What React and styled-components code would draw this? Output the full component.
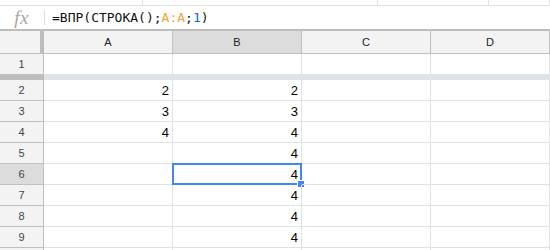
import React from 'react';
import styled, { createGlobalStyle } from 'styled-components';

const COLUMNS = ['A', 'B', 'C', 'D'];
const ROWS = [
  { n: 2, a: '2', b: '2' },
  { n: 3, a: '3', b: '3' },
  { n: 4, a: '4', b: '4' },
  { n: 5, a: '', b: '4' },
  { n: 6, a: '', b: '4', active: true },
  { n: 7, a: '', b: '4' },
  { n: 8, a: '', b: '4' },
  { n: 9, a: '', b: '4' },
  { n: 10, a: '', b: '', hidden: true },
];

const GlobalStyle = createGlobalStyle`
  html, body {
    margin: 0;
    padding: 0;
    background: #fff;
    overflow: hidden;
  }
  body {
    font-family: "Liberation Sans", Arial, sans-serif;
  }
`;

const App = () => (
  <>
    <GlobalStyle />
    <Sheet>
      <TopStrip>
        <StripPart w={143} />
        <StripPart w={235} />
        <StripPart w={111} />
        <StripPart />
      </TopStrip>
      <FormulaBar>
        <FxBox>fx</FxBox>
        <FormulaText>
          =ВПР(СТРОКА();<RangeRef>A:A</RangeRef>;<NumRef>1</NumRef>)
        </FormulaText>
      </FormulaBar>
      <Grid>
        <Corner />
        {COLUMNS.map((c) => (
          <ColHeader key={c} selected={c === 'B'}>
            {c}
          </ColHeader>
        ))}

        <RowHeader>1</RowHeader>
        {COLUMNS.map((c) => (
          <Cell key={`1${c}`} />
        ))}

        <FrozenHead />
        <FrozenBar />

        {ROWS.map((row) => (
          <React.Fragment key={row.n}>
            <RowHeader selected={row.active}>{row.hidden ? '' : row.n}</RowHeader>
            <Cell>{row.a}</Cell>
            <Cell>
              {row.b}
              {row.active && (
                <Selection>
                  <FillHandle />
                </Selection>
              )}
            </Cell>
            <Cell />
            <Cell />
          </React.Fragment>
        ))}
      </Grid>
    </Sheet>
  </>
);

const Sheet = styled.div`
  width: 550px;
  height: 250px;
  overflow: hidden;
  background: #fff;
`;

const TopStrip = styled.div`
  display: flex;
  height: 6px;
  border-bottom: 1px solid #e2e2e2;
  box-sizing: border-box;
`;

const StripPart = styled.div`
  flex: ${({ w }) => (w ? `0 0 ${w}px` : '1')};
  border-right: 1px solid #e2e2e2;
  box-sizing: border-box;
`;

const FormulaBar = styled.div`
  display: flex;
  align-items: center;
  height: 25px;
  border-bottom: 2px solid #bdbdbd;
  box-sizing: border-box;
`;

const FxBox = styled.div`
  width: 43px;
  height: 15px;
  border-right: 1px solid #dadada;
  display: flex;
  align-items: center;
  justify-content: center;
  font-family: "Liberation Serif", "Times New Roman", serif;
  font-style: italic;
  font-size: 19px;
  color: #a6a6a6;
  letter-spacing: 0.5px;
  padding-right: 1px;
`;

const FormulaText = styled.div`
  padding-left: 7px;
  font-family: "DejaVu Sans Mono", "Liberation Mono", monospace;
  font-size: 13px;
  color: #111;
  white-space: pre;
  line-height: 16px;
`;

const RangeRef = styled.span`
  color: #f4a23a;
`;

const NumRef = styled.span`
  color: #1565c0;
`;

const Grid = styled.div`
  display: grid;
  grid-template-columns: 44px 129px 129px 129px 1fr;
  grid-auto-rows: 21px;
  grid-template-rows: 23px 21px 5px;
`;

const Corner = styled.div`
  background: #f3f3f3;
  border-right: 4px solid #bdbdbd;
  border-bottom: 1px solid #c0c0c0;
  box-sizing: border-box;
`;

const ColHeader = styled.div`
  display: flex;
  align-items: center;
  justify-content: center;
  background: ${({ selected }) => (selected ? '#dcdcdc' : '#f3f3f3')};
  border-right: 1px solid #c0c0c0;
  border-bottom: 1px solid #c0c0c0;
  box-sizing: border-box;
  font-size: 11px;
  color: #222;
`;

const RowHeader = styled.div`
  display: flex;
  align-items: center;
  justify-content: center;
  background: ${({ selected }) => (selected ? '#dcdcdc' : '#f3f3f3')};
  border-right: 1px solid #c0c0c0;
  border-bottom: 1px solid #c0c0c0;
  box-sizing: border-box;
  font-size: 11px;
  color: #444;
`;

const FrozenHead = styled.div`
  background: #bdbdbd;
`;

const FrozenBar = styled.div`
  grid-column: 2 / -1;
  background: #dee3ea;
`;

const Cell = styled.div`
  position: relative;
  display: flex;
  align-items: center;
  justify-content: flex-end;
  padding-right: 3px;
  border-right: 1px solid #e2e2e2;
  border-bottom: 1px solid #e2e2e2;
  box-sizing: border-box;
  font-size: 13px;
  color: #000;
`;

const Selection = styled.div`
  position: absolute;
  left: -1px;
  top: -1px;
  right: -1px;
  bottom: -1px;
  border: 2px solid #4285f4;
  pointer-events: none;
`;

const FillHandle = styled.div`
  position: absolute;
  right: -5px;
  bottom: -5px;
  width: 6px;
  height: 6px;
  background: #4285f4;
  border: 1px solid #fff;
`;

export default App;
